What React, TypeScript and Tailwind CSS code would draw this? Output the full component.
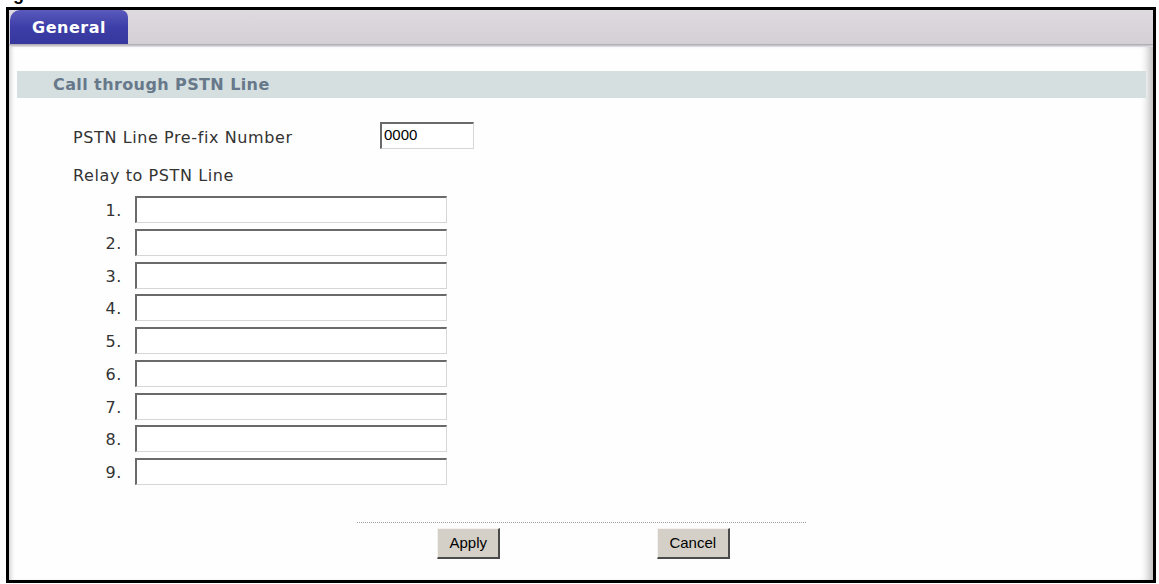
import React from "react";

const font = { fontFamily: '"DejaVu Sans", Verdana, sans-serif' };
const arial = { fontFamily: '"Liberation Sans", Arial, sans-serif' };

function TextBox({ w, value }: { w: string; value?: string }) {
  return (
    <div
      className={`${w} h-[27px] bg-white border-t-2 border-l-2 border-r border-b border-t-[#6a6a6a] border-l-[#6a6a6a] border-r-[#d6d6d6] border-b-[#d6d6d6] flex items-center pl-[2px] text-[15px] text-black`}
      style={arial}
    >
      {value}
    </div>
  );
}

function Btn({ label, w }: { label: string; w: string }) {
  return (
    <div
      className={`${w} h-[31px] bg-[#d4d0c8] border-t border-l border-t-[#f4f2ee] border-l-[#f4f2ee] border-r-2 border-b-2 border-r-[#4a4a4a] border-b-[#4a4a4a] flex items-center justify-center text-[15px] text-black`}
      style={arial}
    >
      {label}
    </div>
  );
}

export default function App() {
  const rows = [1, 2, 3, 4, 5, 6, 7, 8, 9];
  return (
    <div className="w-[1159px] h-[584px] bg-white overflow-hidden">
      <div className="h-[7px] overflow-hidden pl-[13px]">
        <span className="block font-bold text-[18px] leading-none -mt-[15px] text-black" style={arial}>
          g
        </span>
      </div>
      <div className="ml-[6px] w-[1150px] h-[576px] border-[3px] border-black flex flex-col bg-white" style={font}>
        <div className="h-[34px] shrink-0 bg-gradient-to-b from-[#dedae0] to-[#d3cfd5] flex pl-px">
          <div className="w-[118px] rounded-tl-[10px] rounded-tr-[7px] bg-gradient-to-b from-[#5a5abc] via-[#3e3ea8] to-[#36369e] flex items-center justify-center text-white font-bold text-[16px] tracking-[0.5px] pt-[1px]">
            General
          </div>
        </div>
        <div className="h-[3px] shrink-0 bg-gradient-to-b from-[#a9a5ab] to-[#e6e4e8]" />
        <div className="flex-1 flex flex-col bg-[#fefefe] shadow-[inset_-10px_0_8px_-6px_rgba(0,0,0,0.28),inset_5px_0_4px_-3px_rgba(0,0,0,0.18)]">
          <div className="mt-[24px] ml-[8px] mr-[7px] h-[27px] bg-[#d5dfe0] flex items-center pl-[36px] text-[16px] font-bold tracking-[0.4px] text-[#66788a]">
            Call through PSTN Line
          </div>
          <div className="mt-[24px] flex items-center h-[26px] pl-[64px]">
            <div className="w-[307px] text-[16px] tracking-[0.6px] text-[#333] pt-[5px]">PSTN Line Pre-fix Number</div>
            <TextBox w="w-[94px]" value="0000" />
          </div>
          <div className="mt-[18px] pl-[64px] h-[19px] text-[16px] tracking-[0.6px] leading-[19px] text-[#333]">Relay to PSTN Line</div>
          <div className="mt-[11px] flex flex-col gap-[5.75px]">
            {rows.map((n) => (
              <div key={n} className="flex items-center pl-[64px]">
                <div className="w-[49px] text-right text-[16px] tracking-[0.6px] text-[#333] pt-[3px]">{n}.</div>
                <div className="ml-[13px]">
                  <TextBox w="w-[312px]" />
                </div>
              </div>
            ))}
          </div>
          <div className="mt-[37px] mx-auto w-[449px] border-t border-dotted border-[#a0a0a0]">
            <div className="grid grid-cols-2 mt-[5px]">
              <div className="flex justify-center">
                <Btn label="Apply" w="w-[63px]" />
              </div>
              <div className="flex justify-center">
                <Btn label="Cancel" w="w-[73px]" />
              </div>
            </div>
          </div>
        </div>
      </div>
    </div>
  );
}
